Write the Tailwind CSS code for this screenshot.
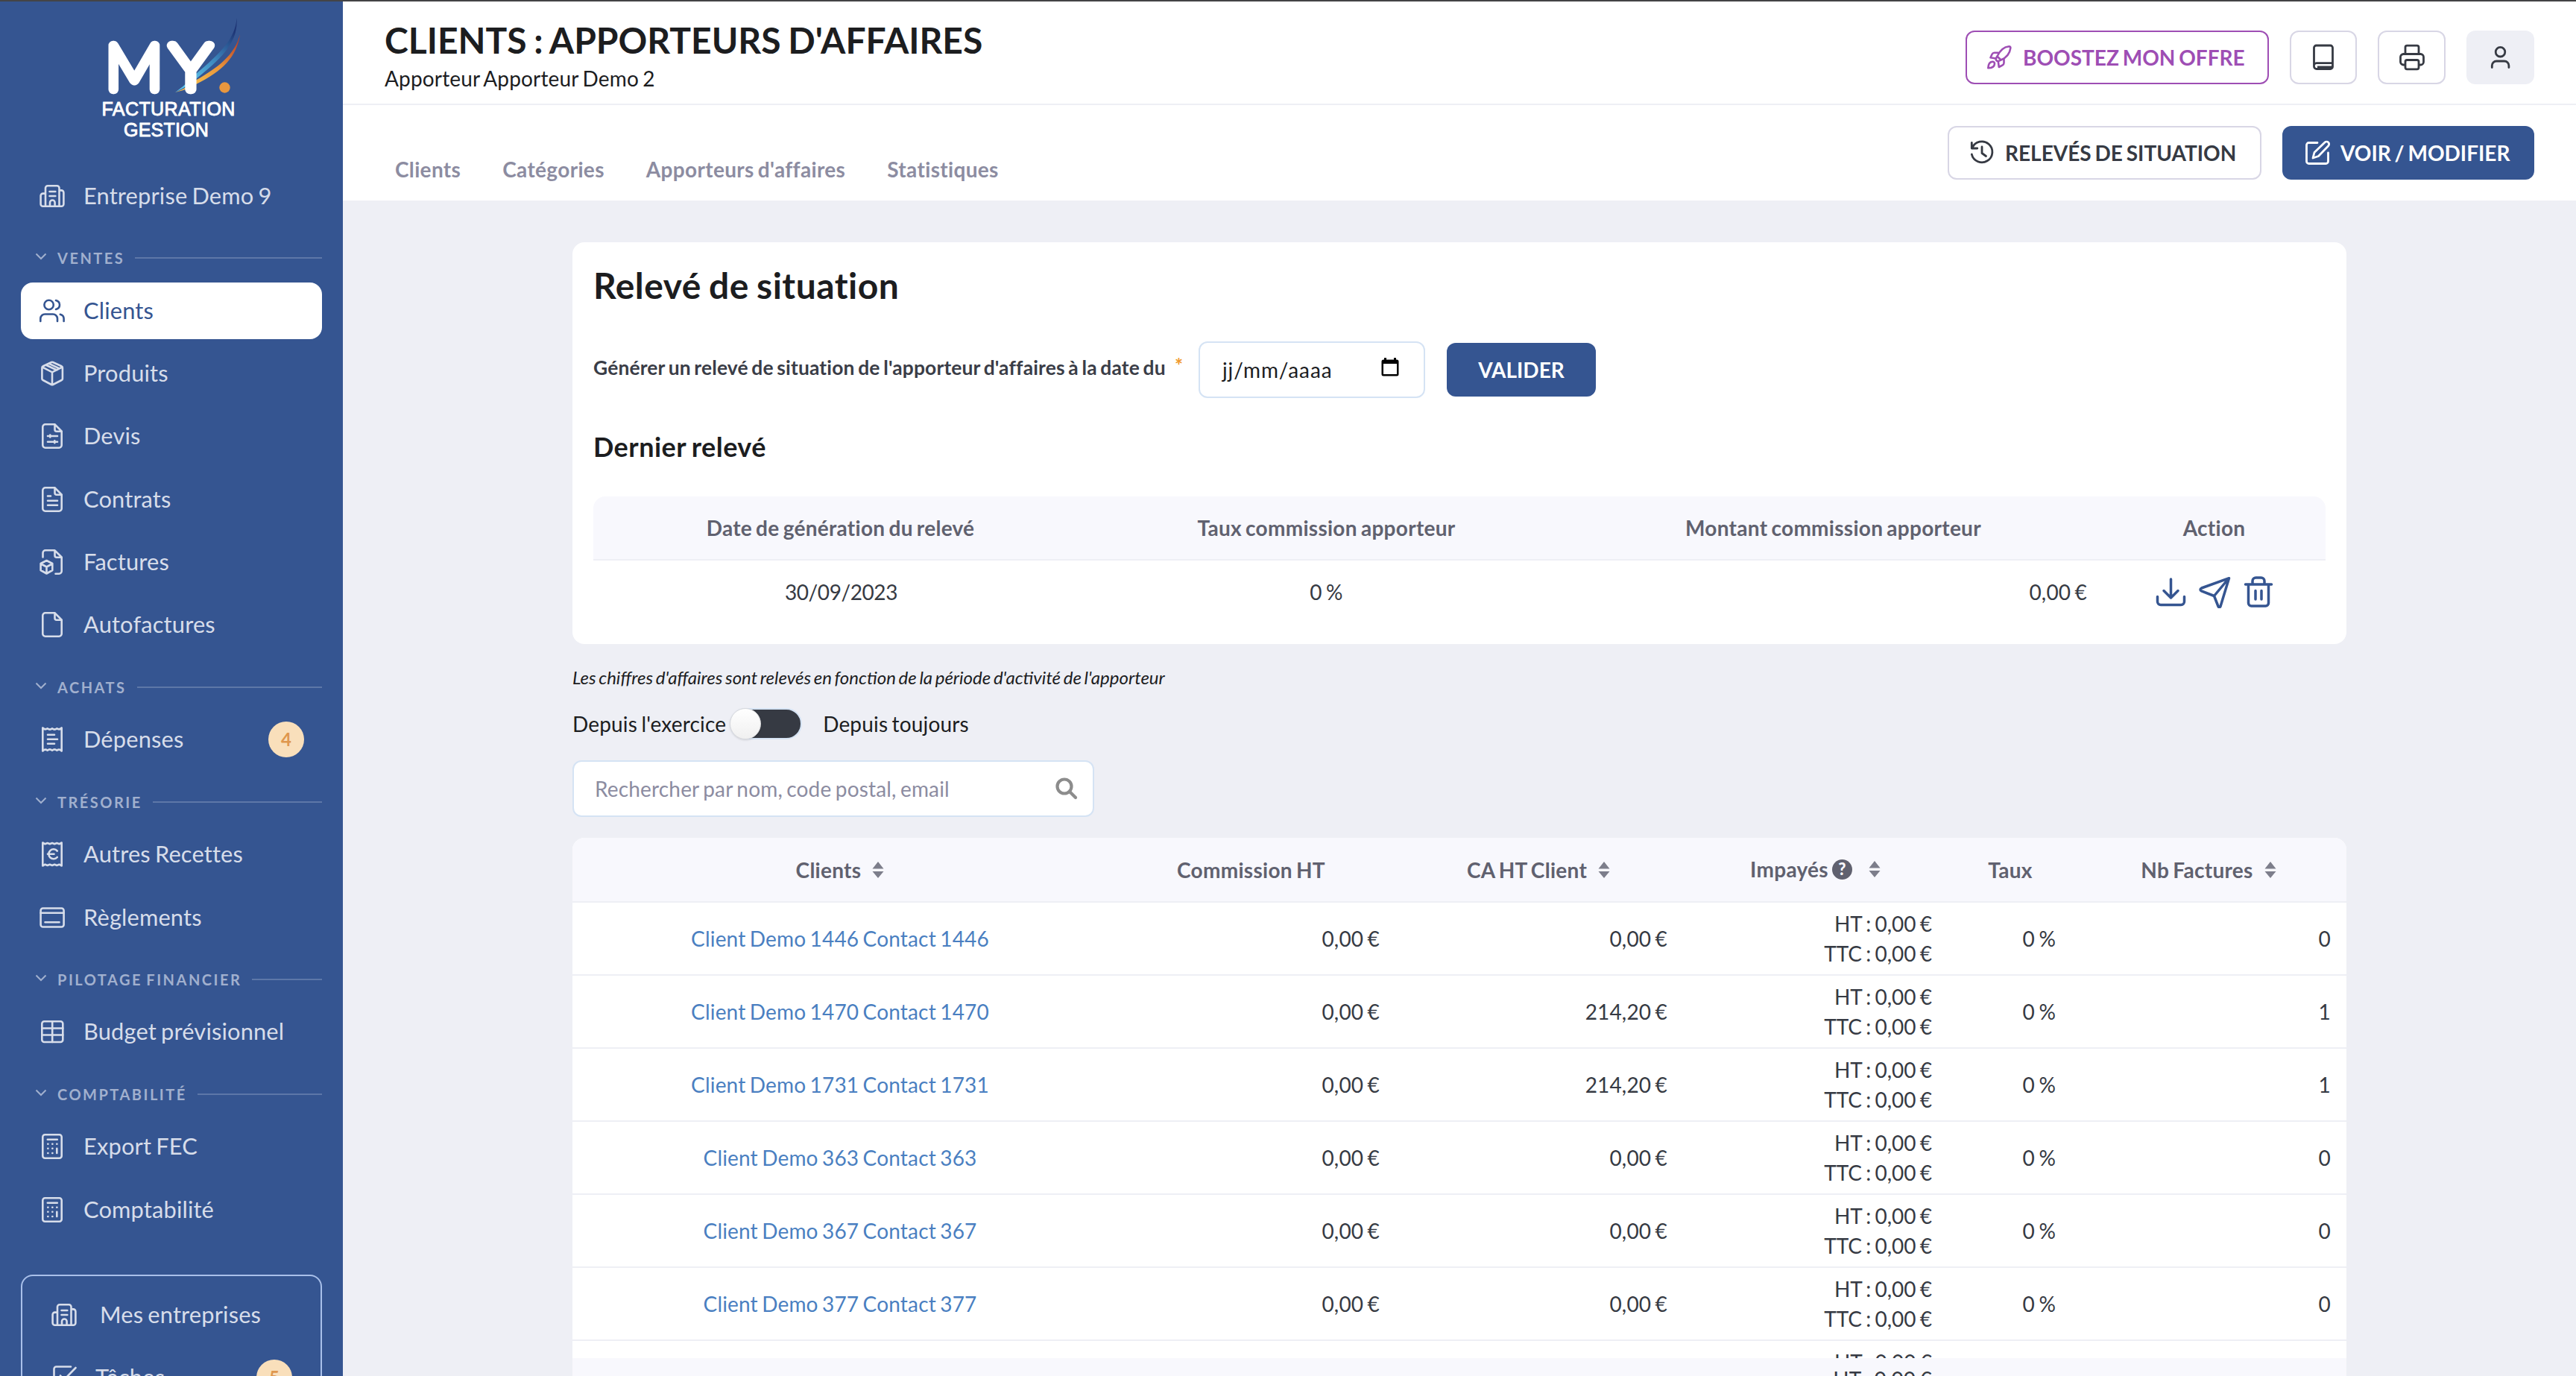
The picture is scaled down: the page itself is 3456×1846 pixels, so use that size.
<!DOCTYPE html>
<html lang="fr">

<head>
    <meta charset="utf-8">
    <meta name="viewport" content="width=device-width, initial-scale=1">
    <title>Clients : apporteurs d'affaires</title>
    <script src="https://cdn.jsdelivr.net/npm/@tailwindcss/browser@4"></script>
</head>

<body class="h-[1846px] overflow-hidden bg-[#eeeff5] font-['Lato',sans-serif] text-[28px] leading-10 tracking-[0.006em] [word-spacing:-0.07em] text-[#1c1d1f]">

<!-- icon sprite -->
<svg class="hidden">
  <symbol id="i-building" viewBox="0 0 36 36"><path d="M9 31.8V7.2a3 3 0 0 1 3-3h12.5a3 3 0 0 1 3 3v24.6M9 14.6H5.6a3 3 0 0 0-3 3v11.2a3 3 0 0 0 3 3h24.8a3 3 0 0 0 3-3V13.4a3 3 0 0 0-3-3h-2.9M14.5 12h7.8M14.5 18h7.8M15 31.8v-5a3.3 3.3 0 0 1 6.6 0v5"/></symbol>
  <symbol id="i-users" viewBox="0 0 36 36"><circle cx="13.6" cy="10" r="6.2"/><path d="M23 4c3 .8 5 3.200 5 6s-2 5.200-5 6M2.300 32v-3.500a6 6 0 0 1 6-6h10.700a6 6 0 0 1 6 6V32M28.800 22.800c3 .8 4.800 3 4.800 5.700V32"/></symbol>
  <symbol id="i-box" viewBox="0 0 36 36"><path d="M19 3l11.500 5.300a2.200 2.200 0 0 1 1.400 2V25a2.200 2.200 0 0 1-1.300 2L19 33a2.500 2.500 0 0 1-2 0L5.700 27a2.200 2.200 0 0 1-1.300-2V10.300a2.200 2.200 0 0 1 1.400-2L17 3a2.500 2.500 0 0 1 2 0zM5 9.700l13 6.600 13.300-6.600M18 16.500v16.700M9.800 6.700l14.500 6.800M13.800 4.800l13.900 6.600"/></symbol>
  <symbol id="i-file" viewBox="0 0 36 36"><path d="M8.800 2.300h12.700l9.200 9.200v18.700a3.500 3.500 0 0 1-3.500 3.500H8.800a3.500 3.500 0 0 1-3.500-3.500V5.800a3.500 3.500 0 0 1 3.500-3.500zM21.500 2.500v6.700a2.500 2.500 0 0 0 2.500 2.500h6.500"/></symbol>
  <symbol id="i-calc" viewBox="0 0 36 36"><rect x="5.300" y="2.300" width="25.400" height="31.400" rx="3"/><path d="M11.800 8.700h13M12.300 14.700h.1M18.300 14.700h.1M24.300 14.700h.1M12.300 20.800h.1M18.300 20.800h.1M12.300 27h.1M18.300 27h.1M24.300 20.800V27"/></symbol>
  <symbol id="i-chevron" viewBox="0 0 16 10"><path d="M1.500 1.500L8 8l6.500-6.500"/></symbol>
  <symbol id="i-sort" viewBox="0 0 16 24"><path d="M8 1l7.500 9.500H.500zM8 23L.500 14h15z"/></symbol>
</svg>

<div class="h-[2px] bg-[#444446]"></div>
<div class="flex h-[1844px]">

  <!-- start sidebar -->
  <aside class="flex w-[460px] flex-none flex-col overflow-hidden bg-[#355591] px-7 text-[30.800px] text-[#d7ddea] *:flex-none">
    <svg class="-ml-7 block h-[198px] w-[460px] [word-spacing:0]" viewBox="0 2 460 198">
      <defs>
        <linearGradient id="blue" x1="0" y1="1" x2="0.700" y2="0"><stop offset="0.200" stop-color="#5cc4ea"/><stop offset="0.600" stop-color="#3c86bd"/><stop offset="1" stop-color="#1e3575"/></linearGradient>
        <linearGradient id="orange" x1="0" y1="1" x2="0.800" y2="0"><stop offset="0.200" stop-color="#f6bd4b"/><stop offset="0.600" stop-color="#e9953b"/><stop offset="1" stop-color="#b8442a"/></linearGradient>
      </defs>
      <path d="M317.500 24C316 52 295 72 263 99Q249 114 235 124Q250 117 263 106C296 79 320 58 317.500 24z" fill="url(#blue)"/>
      <path d="M322 46C315 74 292 91 263 107.500Q250 119 235 124Q250 121 263 113C298 96 318 76 322 46z" fill="url(#orange)"/>
      <circle cx="301.500" cy="117.500" r="7.200" fill="#e8973f"/>
      <g fill="#fff" stroke="#fff" stroke-width="12.500" stroke-linejoin="round" stroke-linecap="round" font-family="Lato" font-weight="100" font-size="84">
        <text x="142" y="119.500" textLength="76" lengthAdjust="spacingAndGlyphs">M</text>
        <text x="229" y="119.500" textLength="54" lengthAdjust="spacingAndGlyphs">Y</text>
      </g>
      <g fill="#fff" stroke="#fff" stroke-width="0.900" font-family="Liberation Sans" font-size="25" text-anchor="middle">
        <text x="226" y="155" textLength="179">FACTURATION</text>
        <text x="223" y="182.500" textLength="114">GESTION</text>
      </g>
    </svg>

    <div class="mt-[25px] flex h-[76px] items-center pl-6">
      <svg class="size-9 fill-none stroke-current [stroke-linecap:round]" stroke-width="2.600"><use href="#i-building"/></svg>
      <span class="ml-6">Entreprise Demo 9</span>
    </div>

    <!-- ventes -->
    <div class="mt-[3.800px] flex h-[69.600px] items-center pt-[13px] pl-[19px] text-xl font-bold tracking-[2.500px] text-[#a1b0ce]">
      <svg class="-mt-1 h-[10px] w-4 fill-none stroke-current" stroke-width="2"><use href="#i-chevron"/></svg>
      <span class="ml-[14px]">VENTES</span><span class="ml-[14px] h-[2px] flex-1 bg-[#5d77a8]"></span>
    </div>
    <a class="my-[4.180px] flex h-[76px] items-center rounded-2xl bg-white pl-6 text-[#355591]">
      <svg class="size-9 fill-none stroke-current [stroke-linecap:round]" stroke-width="2.600"><use href="#i-users"/></svg>
      <span class="ml-6">Clients</span>
    </a>
    <a class="my-[4.180px] flex h-[76px] items-center pl-6">
      <svg class="size-9 fill-none stroke-current [stroke-linecap:round]" stroke-width="2.600"><use href="#i-box"/></svg>
      <span class="ml-6">Produits</span>
    </a>
    <a class="my-[4.180px] flex h-[76px] items-center pl-6">
      <svg class="size-9 fill-none stroke-current [stroke-linecap:round]" stroke-width="2.600"><use href="#i-file"/><path d="M12 18h13M12 25.800h13M15.300 16.500v3M21.300 24.300v3"/></svg>
      <span class="ml-6">Devis</span>
    </a>
    <a class="my-[4.180px] flex h-[76px] items-center pl-6">
      <svg class="size-9 fill-none stroke-current [stroke-linecap:round]" stroke-width="2.600"><use href="#i-file"/><path d="M12 13.500h4M12 19.800h13M12 25.800h13"/></svg>
      <span class="ml-6">Contrats</span>
    </a>
    <a class="my-[4.180px] flex h-[76px] items-center pl-6">
      <svg class="size-9 fill-none stroke-current [stroke-linecap:round] [stroke-linejoin:round]" stroke-width="2.600"><path d="M5.500 11.500V5.800a3.500 3.500 0 0 1 3.500-3.500h12.500l9.200 9.200v18.700a3.500 3.500 0 0 1-3.500 3.500H22.500M21.500 2.500v6.700a2.500 2.500 0 0 0 2.500 2.500h6.500M10.500 16l7.800 4v9l-7.800 4.500-7.900-4.500v-9zM3 20.500l7.500 4 7.500-4M10.500 24.500v8.500"/></svg>
      <span class="ml-6">Factures</span>
    </a>
    <a class="my-[4.180px] flex h-[76px] items-center pl-6">
      <svg class="size-9 fill-none stroke-current [stroke-linecap:round]" stroke-width="2.600"><use href="#i-file"/></svg>
      <span class="ml-6">Autofactures</span>
    </a>

    <!-- achats -->
    <div class="flex h-[69.600px] items-center pt-[13px] pl-[19px] text-xl font-bold tracking-[2.500px] text-[#a1b0ce]">
      <svg class="-mt-1 h-[10px] w-4 fill-none stroke-current" stroke-width="2"><use href="#i-chevron"/></svg>
      <span class="ml-[14px]">ACHATS</span><span class="ml-[14px] h-[2px] flex-1 bg-[#5d77a8]"></span>
    </div>
    <a class="my-[4.180px] flex h-[76px] items-center pl-6">
      <svg class="size-9 fill-none stroke-current [stroke-linecap:round] [stroke-linejoin:round]" stroke-width="2.600"><path d="M5.300 2.500v31M30.700 2.500v31M5.300 2.500q3.200 3.400 6.350 0.800q3.200 2.600 6.350 0q3.200 2.600 6.350 0q3.200 2.600 6.350-0.800M5.300 33.500q3.200-3.400 6.350-0.800q3.200-2.600 6.350 0q3.200-2.600 6.350 0q3.200-2.600 6.350 0.800M12 11.700h9M12 17.800h13M12 23.700h9"/></svg>
      <span class="ml-6">Dépenses</span>
      <span class="mr-6 ml-auto flex size-12 items-center justify-center rounded-full bg-[#f9dfbb] text-2xl font-bold text-[#df974e]">4</span>
    </a>

    <!-- tresorerie -->
    <div class="flex h-[69.600px] items-center pt-[13px] pl-[19px] text-xl font-bold tracking-[2.500px] text-[#a1b0ce]">
      <svg class="-mt-1 h-[10px] w-4 fill-none stroke-current" stroke-width="2"><use href="#i-chevron"/></svg>
      <span class="ml-[14px]">TRÉSORIE</span><span class="ml-[14px] h-[2px] flex-1 bg-[#5d77a8]"></span>
    </div>
    <a class="my-[4.180px] flex h-[76px] items-center pl-6">
      <svg class="size-9 fill-none stroke-current [stroke-linecap:round] [stroke-linejoin:round]" stroke-width="2.600"><path d="M5.300 2.500v31M30.700 2.500v31M5.300 2.500l3.200 1.800 3.100-1.300 3.200 1.300 3.200-1.300 3.200 1.300 3.100-1.300 3.200 1.300 3.200-1.800M5.300 33.500l3.200-1.800 3.100 1.300 3.200-1.300 3.200 1.300 3.200-1.300 3.100 1.300 3.200-1.300 3.200 1.800M24.800 13.600a6.500 6.500 0 1 0 0 8.400M12 17.800h8.500"/></svg>
      <span class="ml-6">Autres Recettes</span>
    </a>
    <a class="my-[4.180px] flex h-[76px] items-center pl-6">
      <svg class="size-9 fill-none stroke-current [stroke-linecap:round]" stroke-width="2.600"><rect x="2.600" y="5.500" width="31" height="25" rx="3"/><path d="M2.600 11.800h31M8.500 24.300h19"/></svg>
      <span class="ml-6">Règlements</span>
    </a>

    <!-- pilotage financier -->
    <div class="flex h-[69.600px] items-center pt-[13px] pl-[19px] text-xl font-bold tracking-[2.500px] text-[#a1b0ce]">
      <svg class="-mt-1 h-[10px] w-4 fill-none stroke-current" stroke-width="2"><use href="#i-chevron"/></svg>
      <span class="ml-[14px]">PILOTAGE FINANCIER</span><span class="ml-[14px] h-[2px] flex-1 bg-[#5d77a8]"></span>
    </div>
    <a class="my-[4.180px] flex h-[76px] items-center pl-6">
      <svg class="size-9 fill-none stroke-current [stroke-linecap:round]" stroke-width="2.600"><rect x="4.300" y="4.300" width="28" height="27.700" rx="3"/><path d="M4.300 13.500h28M4.300 22.500h28M18.200 4.300V32"/></svg>
      <span class="ml-6">Budget prévisionnel</span>
    </a>

    <!-- comptabilite -->
    <div class="flex h-[69.600px] items-center pt-[13px] pl-[19px] text-xl font-bold tracking-[2.500px] text-[#a1b0ce]">
      <svg class="-mt-1 h-[10px] w-4 fill-none stroke-current" stroke-width="2"><use href="#i-chevron"/></svg>
      <span class="ml-[14px]">COMPTABILITÉ</span><span class="ml-[14px] h-[2px] flex-1 bg-[#5d77a8]"></span>
    </div>
    <a class="my-[4.180px] flex h-[76px] items-center pl-6">
      <svg class="size-9 fill-none stroke-current [stroke-linecap:round]" stroke-width="2.600"><use href="#i-calc"/></svg>
      <span class="ml-6">Export FEC</span>
    </a>
    <a class="my-[4.180px] flex h-[76px] items-center pl-6">
      <svg class="size-9 fill-none stroke-current [stroke-linecap:round]" stroke-width="2.600"><use href="#i-calc"/></svg>
      <span class="ml-6">Comptabilité</span>
    </a>

    <div class="mt-[45px] h-[300px] rounded-2xl border-2 border-[#a9c0ea] pt-[14px]">
      <a class="flex h-[76px] items-center pl-[38px]">
        <svg class="size-9 fill-none stroke-current [stroke-linecap:round]" stroke-width="2.600"><use href="#i-building"/></svg>
        <span class="ml-[30px]">Mes entreprises</span>
      </a>
      <a class="mt-2 flex h-[76px] items-center pl-[38px]">
        <svg class="size-9 fill-none stroke-current [stroke-linecap:round] [stroke-linejoin:round]" stroke-width="2.600"><path d="M27 3.500H7.500a3 3 0 0 0-3 3v23a3 3 0 0 0 3 3h22a3 3 0 0 0 3-3V18M13 15.500l5 5.500L33.500 5"/></svg>
        <span class="ml-6">Tâches</span>
        <span class="mr-[38px] ml-auto flex size-12 items-center justify-center rounded-full bg-[#f9dfbb] text-2xl font-bold text-[#df974e]">5</span>
      </a>
    </div>
  </aside>
  <!-- end sidebar -->

  <main class="flex min-w-0 flex-1 flex-col">
    <!-- top bar -->
    <header class="flex h-[139px] flex-none items-center justify-between border-b-2 border-[#eeeff5] bg-white pr-14 pl-14">
      <div class="mt-[7px]">
        <h1 class="text-5xl leading-[60px] font-bold tracking-normal [word-spacing:-0.040em]">CLIENTS : APPORTEURS D'AFFAIRES</h1>
        <p class="mt-px">Apporteur Apporteur Demo 2</p>
      </div>
      <div class="mt-[13px] flex h-[72px] gap-7 tracking-normal text-[#363a43]">
        <a class="flex w-[407px] items-center rounded-xl border-2 border-[#9e4eb4] pl-[25px] font-bold text-[#9e4eb4]">
          <svg class="size-9 fill-none stroke-current [stroke-linecap:round] [stroke-linejoin:round]" stroke-width="2.600"><path d="M15.500 16.500C19 9 25 3.800 31.300 3.200q2.400 0 2 2.400C32.500 12 28.500 18 20.500 21.500zM16.500 11.800h-4.700a3.500 3.500 0 0 0-3.200 2L6.500 18.300l7.500 1.200M24.500 20.500v5a3.500 3.500 0 0 1-1.800 2.900L17.800 31l-1-7.500M15.500 16.500l-1.700 3a2 2 0 0 0 .4 2.300l1 .9a2 2 0 0 0 2.200.2l3.100-1.400M9 23.700c-3.800.4-5.500 3.300-5.700 8.600 5.300 0 8.400-1.700 8.700-5.600.1-1.900-1.200-3.100-3-3z"/></svg>
          <span class="ml-[14px]">BOOSTEZ MON OFFRE</span>
        </a>
        <a class="flex w-[90px] items-center justify-center rounded-xl border-2 border-[#d8d6e5]">
          <svg class="size-9 fill-none stroke-current" stroke-width="2.800"><path d="M30.500 27.500V5a3 3 0 0 0-3-3h-19a3 3 0 0 0-3 3v25a3.500 3.500 0 0 0 3.500 3.500h18.500a3 3 0 0 0 3-3zM5.500 30a3.500 3.500 0 0 1 3.500-4.300h21.500M10 31h20"/></svg>
        </a>
        <a class="flex w-[91px] items-center justify-center rounded-xl border-2 border-[#d8d6e5]">
          <svg class="size-9 fill-none stroke-current [stroke-linejoin:round]" stroke-width="2.800"><path d="M9 13V4.500A2.300 2.300 0 0 1 11.300 2.200h13.400A2.300 2.300 0 0 1 27 4.500V13M9 28H6.500a4 4 0 0 1-4-4v-6.500a4 4 0 0 1 4-4h23a4 4 0 0 1 4 4V24a4 4 0 0 1-4 4H27"/><rect x="9" y="21.500" width="18" height="12.300" rx="2.300"/></svg>
        </a>
        <a class="flex w-[91px] items-center justify-center rounded-xl bg-[#eeeff5]">
          <svg class="size-9 fill-none stroke-current [stroke-linecap:round]" stroke-width="2.800"><circle cx="17.500" cy="10.700" r="6.300"/><path d="M6.300 31.500V29a6 6 0 0 1 6-6h10.600a6 6 0 0 1 6 6v2.500"/></svg>
        </a>
      </div>
    </header>

    <!-- tabs -->
    <nav class="flex h-[128px] flex-none items-center justify-between bg-white px-14">
      <div class="flex gap-14 self-end pb-[22px] pl-[14px] font-bold tracking-[0.012em] text-[#8c8ca1]">
        <a>Clients</a>
        <a>Catégories</a>
        <a>Apporteurs d'affaires</a>
        <a>Statistiques</a>
      </div>
      <div class="flex h-[72px] gap-7 font-bold tracking-normal">
        <a class="flex w-[421px] items-center rounded-xl border-2 border-[#d8d6e5] pl-[26px] text-[#363a43]">
          <svg class="size-9 fill-none stroke-current [stroke-linecap:round] [stroke-linejoin:round]" stroke-width="2.800"><path d="M4.300 4.500v7.500h7.500M5 11.500A14 14 0 1 1 4.300 20M18 10v8.500l5.500 4"/></svg>
          <span class="ml-[13px]">RELEVÉS DE SITUATION</span>
        </a>
        <a class="flex w-[338px] items-center rounded-xl bg-[#355591] pl-[29px] text-white">
          <svg class="size-9 fill-none stroke-current [stroke-linecap:round] [stroke-linejoin:round]" stroke-width="2.800"><path d="M18 4.500H6.500a3 3 0 0 0-3 3v22a3 3 0 0 0 3 3h23a3 3 0 0 0 3-3V18M28 4a3.300 3.300 0 0 1 4.700 4.700L19.500 22.500 12 25l2-7.500z"/></svg>
          <span class="ml-[13px]">VOIR / MODIFIER</span>
        </a>
      </div>
    </nav>

    <!-- body -->
    <div class="mx-auto mr-[308px] flex min-h-0 w-[2380px] flex-1 flex-col pt-14">
      <section class="h-[539px] flex-none rounded-2xl bg-white p-7">
        <h2 class="text-5xl leading-[60px] font-bold tracking-[0.010em]">Relevé de situation</h2>
        <div class="mt-[45px] flex h-[76px] items-center">
          <label class="-mt-[6px] w-[770px] text-[26.400px] font-bold tracking-[0.006em] whitespace-nowrap text-[#3a3d47]">Générer un relevé de situation de l'apporteur d'affaires à la date du</label>
          <span class="-mt-3 ml-[10px] w-[10px] text-[26px] font-bold text-[#f0992e]">*</span>
          <div class="ml-[22px] flex h-[76px] w-[304px] items-center justify-between rounded-xl border-2 border-[#d5e3f4] pr-[33px] pl-[30px]">
            <span class="tracking-[0.900px]">jj/mm/aaaa</span>
            <svg class="-mt-2 h-[25px] w-6" viewBox="0 0 24 25"><path d="M4 0h3v2.500h10V0h3v2.500h1a2.500 2.500 0 0 1 2.500 2.500v17a2.500 2.500 0 0 1-2.500 2.500H3A2.500 2.500 0 0 1 .5 22V5A2.500 2.500 0 0 1 3 2.500h1zM3 8v14h18V8z"/></svg>
          </div>
          <a class="ml-[29px] flex h-[72px] w-[200px] items-center justify-center rounded-xl bg-[#355591] font-bold tracking-normal text-white">VALIDER</a>
        </div>
        <h3 class="mt-[43px] text-4xl leading-[44px] font-bold tracking-[0.013em]">Dernier relevé</h3>
        <div class="mt-[45px]">
          <div class="grid h-[86px] grid-cols-[663px_641px_719px_301px] items-center rounded-t-2xl border-b-2 border-[#eeeff5] bg-[#f8f8fd] text-center font-bold tracking-[0.010em] text-[#60616f]">
            <span>Date de génération du relevé</span>
            <span>Taux commission apporteur</span>
            <span>Montant commission apporteur</span>
            <span class="pl-[2px]">Action</span>
          </div>
          <div class="grid h-[84px] grid-cols-[663px_641px_719px_301px] items-center text-center text-[#363a43]">
            <span class="pl-[2px] tracking-[-0.015em]">30/09/2023</span>
            <span>0 %</span>
            <span class="pr-[19px] text-right">0,00 €</span>
            <div class="flex justify-center gap-[14px] pl-1 text-[#355591]">
              <svg class="h-11 w-[45px] fill-none stroke-current [stroke-linecap:round] [stroke-linejoin:round]" stroke-width="3.500"><path d="M22.500 5v25M13 20.500l9.500 9.500 9.500-9.500M4.500 28.500V35a4.500 4.500 0 0 0 4.500 4.500h27a4.500 4.500 0 0 0 4.500-4.500v-6.500"/></svg>
              <svg class="h-11 w-[45px] fill-none stroke-current [stroke-linecap:round] [stroke-linejoin:round]" stroke-width="3.500"><path d="M41.500 3.700L4.500 17c-2 .8-2 3 0 3.800l17 6.700 5.500 14c.6 1.600 2.400 1.500 3 0zM21.500 27.500L41 4"/></svg>
              <svg class="h-11 w-[45px] fill-none stroke-current [stroke-linecap:round] [stroke-linejoin:round]" stroke-width="3.500"><path d="M4.500 12h35M8.500 12v25a4 4 0 0 0 4 4h19a4 4 0 0 0 4-4V12M14 11V7.500A4.500 4.500 0 0 1 18.500 3h7A4.500 4.500 0 0 1 30 7.500V11M18 20.500V32M26 20.500V32"/></svg>
            </div>
          </div>
        </div>
      </section>

      <p class="mt-[27px] text-2xl leading-9 tracking-normal italic">Les chiffres d'affaires sont relevés en fonction de la période d'activité de l'apporteur</p>

      <div class="mt-[23px] flex h-[42px] flex-none items-center">
        <span>Depuis l'exercice</span>
        <span class="ml-[5px] flex h-[42px] w-[97px] rounded-full border-2 border-[#d5e3f4] bg-[#363a43]">
          <span class="-mt-[2px] -ml-[2px] size-[42px] rounded-full border border-[#d9d9dc] bg-linear-to-b from-white to-[#f0f0f0] shadow"></span>
        </span>
        <span class="ml-7">Depuis toujours</span>
      </div>

      <div class="mt-7 flex h-[76px] w-[700px] flex-none items-center justify-between rounded-xl border-2 border-[#d5e3f4] bg-white pr-5 pl-7 text-[#8c8ca1]">
        <span>Rechercher par nom, code postal, email</span>
        <svg class="-mt-px size-[30px] fill-none stroke-[#8c8c8c]" viewBox="0 0 30 30" stroke-width="4.200"><circle cx="12" cy="12" r="9.500"/><path d="M19 19l8 8" stroke-linecap="round"/></svg>
      </div>

      <!-- clients table -->
      <div class="mt-7 h-[698px] flex-none overflow-hidden rounded-t-2xl bg-white">
        <div class="grid h-[87px] grid-cols-[718px_385px_386px_355px_166px_370px] items-center border-b-2 border-[#eeeff5] bg-[#f8f8fd] text-center font-bold tracking-[0.010em] text-[#60616f]">
          <span class="flex items-center justify-center gap-[15px]">Clients<svg class="h-6 w-4 fill-[#7d7e8b]"><use href="#i-sort"/></svg></span>
          <span>Commission HT</span>
          <span class="flex items-center justify-center gap-[15px]">CA HT Client<svg class="h-6 w-4 fill-[#7d7e8b]"><use href="#i-sort"/></svg></span>
          <span class="-mt-[2px] flex items-center justify-center pl-[2px]">Impayés
            <span class="mt-px ml-[5px] flex size-[27px] items-center justify-center rounded-full bg-[#60616f] text-[22px] leading-none font-black text-[#f8f8fd]">?</span>
            <svg class="ml-[22px] h-6 w-4 fill-[#7d7e8b]"><use href="#i-sort"/></svg>
          </span>
          <span class="pl-[4px]">Taux</span>
          <span class="flex items-center justify-center gap-[15px]">Nb Factures<svg class="h-6 w-4 fill-[#7d7e8b]"><use href="#i-sort"/></svg></span>
        </div>
        <div id="rows"></div>
      </div>
      <!-- totals row -->
      <div class="grid flex-1 grid-cols-[718px_385px_386px_355px_166px_370px] overflow-hidden bg-[#f8f8fd] pt-2 text-right text-[#363a43]">
        <span class="col-start-4 pr-5">HT : 0,00 €</span>
      </div>
    </div>
  </main>
</div>

<script>
  const clients = [
    ['Client Demo 1446 Contact 1446', '0,00 €', 0],
    ['Client Demo 1470 Contact 1470', '214,20 €', 1],
    ['Client Demo 1731 Contact 1731', '214,20 €', 1],
    ['Client Demo 363 Contact 363', '0,00 €', 0],
    ['Client Demo 367 Contact 367', '0,00 €', 0],
    ['Client Demo 377 Contact 377', '0,00 €', 0],
    ['', '', ''],
  ];
  document.getElementById('rows').innerHTML = clients.map(([name, ca, nb]) => `
    <div class="grid h-[98px] grid-cols-[718px_385px_386px_355px_166px_370px] items-center border-b-2 border-[#eeeff5] text-right text-[#363a43]">
      <a class="text-center text-[#4a7fc1]">${name}</a>
      <span class="pr-5">${name && '0,00 €'}</span>
      <span class="pr-5">${ca}</span>
      <span class="pr-5 tracking-normal">HT : 0,00 €<br>TTC : 0,00 €</span>
      <span class="pr-5">${name && '0 %'}</span>
      <span class="pr-[21px]">${nb}</span>
    </div>`).join('');
</script>
</body>

</html>
